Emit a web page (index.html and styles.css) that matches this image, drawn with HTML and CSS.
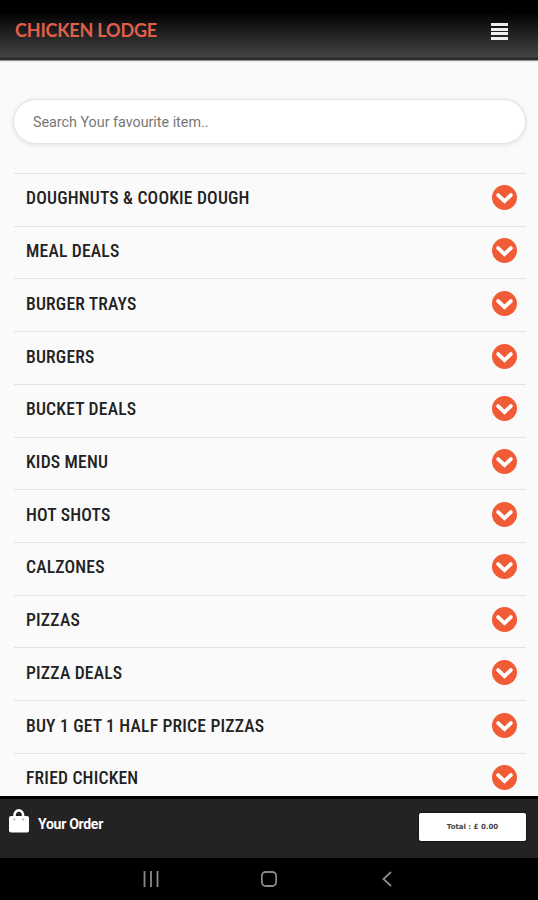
FILE: index.html
```html
<!DOCTYPE html>
<html lang="en">
<head>
  <meta charset="utf-8">
  <title>Chicken Lodge</title>
  <link rel="stylesheet" href="styles.css">
</head>
<body>
  <svg class="symbols">
    <symbol id="chevron" viewBox="0 0 24 24">
      <circle cx="12" cy="12" r="12" fill="#f15b35"/>
      <path d="M5.9 9.7l6.1 5.8 6.1-5.8" fill="none" stroke="#fff" stroke-width="3.6" stroke-linecap="round"/>
    </symbol>
  </svg>

  <header class="header">
    <div class="logo">CHICKEN LODGE</div>
    <div class="menu-btn">
      <span></span>
      <span></span>
      <span></span>
      <span></span>
    </div>
  </header>

  <main class="content">
    <input class="search" type="text" placeholder="Search Your favourite item..">

    <ul class="categories">
      <li><span class="name">DOUGHNUTS &amp; COOKIE DOUGH</span><svg class="arrow"><use href="#chevron"/></svg></li>
      <li><span class="name">MEAL DEALS</span><svg class="arrow"><use href="#chevron"/></svg></li>
      <li><span class="name">BURGER TRAYS</span><svg class="arrow"><use href="#chevron"/></svg></li>
      <li><span class="name">BURGERS</span><svg class="arrow"><use href="#chevron"/></svg></li>
      <li><span class="name">BUCKET DEALS</span><svg class="arrow"><use href="#chevron"/></svg></li>
      <li><span class="name">KIDS MENU</span><svg class="arrow"><use href="#chevron"/></svg></li>
      <li><span class="name">HOT SHOTS</span><svg class="arrow"><use href="#chevron"/></svg></li>
      <li><span class="name">CALZONES</span><svg class="arrow"><use href="#chevron"/></svg></li>
      <li><span class="name">PIZZAS</span><svg class="arrow"><use href="#chevron"/></svg></li>
      <li><span class="name">PIZZA DEALS</span><svg class="arrow"><use href="#chevron"/></svg></li>
      <li><span class="name">BUY 1 GET 1 HALF PRICE PIZZAS</span><svg class="arrow"><use href="#chevron"/></svg></li>
      <li><span class="name">FRIED CHICKEN</span><svg class="arrow"><use href="#chevron"/></svg></li>
    </ul>
  </main>

  <footer class="order-bar">
    <div class="order">
      <svg class="bag" viewBox="0 0 20 24">
        <path d="M5.5 9V6.2a4.3 4.8 0 0 1 8.6 0V9" fill="none" stroke="#fff" stroke-width="2.6"/>
        <rect x="0" y="7" width="20" height="16.5" rx="2" fill="#fff"/>
        <circle cx="5.5" cy="10.5" r="1" fill="#aaa"/>
        <circle cx="14.1" cy="10.5" r="1" fill="#aaa"/>
      </svg>
      <span>Your Order</span>
    </div>
    <button class="total">Total : £ 0.00</button>
  </footer>

  <nav class="system-nav">
    <svg viewBox="0 0 16 16"><path d="M1.5 0v16M8 0v16M14.5 0v16"/></svg>
    <svg viewBox="0 0 16 16"><rect x="0.8" y="1" width="14.4" height="14" rx="4"/></svg>
    <svg viewBox="0 0 16 16"><path d="M12 1L4.5 8l7.5 7"/></svg>
  </nav>
</body>
</html>
```

FILE: styles.css
```css
* {
  box-sizing: border-box;
}
body {
  margin: 0;
  height: 900px;
  display: flex;
  flex-direction: column;
  overflow: hidden;
  background: #fafafa;
  font-family: Roboto, sans-serif;
}
.symbols {
  display: none;
}
.header {
  flex: none;
  height: 60px;
  padding: 2px 30px 0 15px;
  display: flex;
  align-items: center;
  justify-content: space-between;
  background: linear-gradient(#000 0, #000 20%, #1c1c1c 50%, #444 95%, #2a2a2a 97%);
  box-shadow: 0 1px 1px rgba(0, 0, 0, 0.4);
}
.logo {
  font-family: Lato, sans-serif;
  font-size: 18px;
  font-weight: bold;
  letter-spacing: -0.2px;
  line-height: 20px;
  padding-bottom: 2px;
  color: #e15f4b;
}
.menu-btn {
  width: 17px;
  padding-top: 1px;
  display: grid;
  gap: 1.6px;
}
.menu-btn span {
  height: 3px;
  background: #eee;
}
.content {
  flex: 1;
  min-height: 0;
  overflow: hidden;
  padding: 39px 12px 0 13px;
}
.search {
  display: block;
  width: 100%;
  height: 45px;
  padding: 1px 19px 0;
  border: 1px solid #e2e2e2;
  border-radius: 23px;
  background: #fff;
  box-shadow: 0 1px 5px rgba(0, 0, 0, 0.1);
  font-family: Roboto, sans-serif;
  font-size: 14.3px;
}
.search::placeholder {
  color: #777;
}
.categories {
  list-style: none;
  margin: 29px 0 0 1px;
  padding: 0;
}
.categories li {
  height: 52.73px;
  padding: 0 9px 4px 12px;
  display: flex;
  align-items: center;
  justify-content: space-between;
  border-top: 1px solid #e3e3e3;
}
.name {
  padding-top: 1px;
  font-family: "Roboto Condensed", Roboto, sans-serif;
  font-stretch: 75%;
  font-size: 17.6px;
  font-weight: 500;
  letter-spacing: 0.19px;
  color: #222;
  white-space: nowrap;
}
.arrow {
  width: 25px;
  height: 25px;
}
.order-bar {
  flex: none;
  height: 62px;
  padding: 0 12px 3px 9px;
  display: flex;
  align-items: center;
  justify-content: space-between;
  background: #242223;
  border-top: 3px solid #000;
}
.order {
  display: flex;
  align-items: center;
  gap: 9px;
  padding-bottom: 13px;
  color: #fff;
  font-size: 14px;
  font-weight: bold;
  letter-spacing: -0.28px;
}
.order span {
  padding-top: 7px;
}
.bag {
  width: 20px;
  height: 24px;
}
.total {
  width: 107px;
  height: 28px;
  border: 0;
  border-radius: 2px;
  background: #fff;
  box-shadow: 0 0 2px #000;
  color: #444;
  font-family: "DejaVu Sans", sans-serif;
  font-size: 7px;
  font-weight: bold;
}
.system-nav {
  flex: none;
  height: 42px;
  padding: 0 143px;
  display: flex;
  align-items: center;
  justify-content: space-between;
  background: #000;
}
.system-nav svg {
  width: 16px;
  height: 16px;
  fill: none;
  stroke: #8a8a8a;
  stroke-width: 1.8;
}
```
